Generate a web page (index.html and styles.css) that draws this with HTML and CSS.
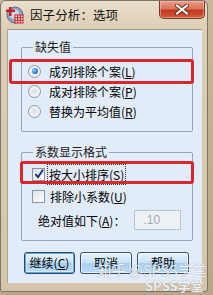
FILE: index.html
```html
<!DOCTYPE html>
<html lang="zh">
<head>
<meta charset="utf-8">
<link rel="stylesheet" href="styles.css">
</head>
<body>
<div class="window">
  <div class="titlebar">
    <svg class="app-icon" width="18" height="18" viewBox="0 0 18 18">
      <circle cx="9" cy="9" r="8" fill="#8fa3bd" stroke="#5d708c" stroke-width="1"/>
      <circle cx="8" cy="8" r="5" fill="#c9d6e6"/>
      <rect x="3" y="1" width="2.5" height="9" fill="#c4202a"/>
      <rect x="0" y="3.5" width="9" height="2.5" fill="#c4202a"/>
      <rect x="9" y="9" width="8" height="8" fill="#f3e3e3" stroke="#c4202a" stroke-width="1"/>
      <path d="M9 11.7H17M9 14.3H17M11.7 9V17M14.3 9V17" stroke="#c4202a" stroke-width="1"/>
    </svg>
    <span class="title">因子分析：选项</span>
    <div class="close">
      <svg width="16" height="11" viewBox="0 0 16 11">
        <path d="M3 1.5L13 9.5M13 1.5L3 9.5" stroke="#6b2a1f" stroke-width="4" stroke-linecap="round"/>
        <path d="M3 1.5L13 9.5M13 1.5L3 9.5" stroke="#fff" stroke-width="2.2" stroke-linecap="round"/>
      </svg>
    </div>
  </div>
  <div class="client">
    <fieldset class="group group-missing">
      <legend>缺失值</legend>
      <div class="row"><span class="radio on"></span><span>成列排除个案(<u>L</u>)</span></div>
      <div class="row"><span class="radio"></span><span>成对排除个案(<u>P</u>)</span></div>
      <div class="row"><span class="radio"></span><span>替换为平均值(<u>R</u>)</span></div>
    </fieldset>
    <fieldset class="group group-format">
      <legend>系数显示格式</legend>
      <div class="row crow"><span class="check on"><svg width="12" height="12" viewBox="0 0 12 12"><path d="M2.5 6.2L5 9.2L10 1.8" fill="none" stroke="#1c2f7a" stroke-width="2"/></svg></span><span class="focus">按大小排序(<u>S</u>)</span></div>
      <div class="row crow"><span class="check"></span><span>排除小系数(<u>U</u>)</span></div>
      <div class="row abs"><span class="abs-label">绝对值如下(<u>A</u>)：</span><span class="input">.10</span></div>
    </fieldset>
    <div class="buttons">
      <div class="btn default">继续(<u>C</u>)</div>
      <div class="btn">取消</div>
      <div class="btn">帮助</div>
    </div>
    <div class="mark mark1"></div>
    <div class="mark mark2"></div>
  </div>
  <div class="watermark">
    <div class="wm1">知乎 @SPSS学堂</div>
    <div class="wm2">SPSS学堂</div>
  </div>
</div>
</body>
</html>
```

FILE: styles.css
```css
html, body {
  margin: 0;
  padding: 0;
}
body {
  width: 213px;
  height: 295px;
  background: linear-gradient(to bottom, #c9b89c, #b9a688);
  font-family: "Noto Sans CJK SC", "Noto Sans", sans-serif;
  font-size: 12px;
  color: #000;
  overflow: hidden;
}
.window {
  position: relative;
  width: 206px;
  height: 290px;
  border: 1px solid #7d7468;
  border-radius: 6px 6px 3px 3px;
  background: linear-gradient(to bottom, #eadfcb 0px, #dccdb4 30px, #d5c5ab 100%);
  display: flex;
  flex-direction: column;
}
.titlebar {
  height: 28px;
  display: flex;
  align-items: flex-start;
  position: relative;
}
.app-icon {
  margin: 5px 0 0 5px;
}
.title {
  margin: 5px 0 0 6px;
  font-size: 12.5px;
  line-height: 17px;
  letter-spacing: 0.1px;
  color: #111;
}
.close {
  position: absolute;
  right: 2px;
  top: 0;
  width: 44px;
  height: 17px;
  border: 1px solid #6e3a2c;
  border-top: none;
  border-radius: 0 0 5px 5px;
  background: linear-gradient(to bottom, #eaa08c 0%, #db7258 45%, #c0391f 55%, #d2593a 100%);
  display: flex;
  align-items: center;
  justify-content: center;
  box-shadow: inset 0 0 0 1px rgba(255,200,180,0.5);
}
.client {
  position: relative;
  margin-left: 6px;
  width: 195px;
  height: 254px;
  box-sizing: border-box;
  background: #e2ecf8;
  border-top: 1px solid #a8987e;
  border-left: 1px solid #b3a48a;
  padding: 10px 0 0 13px;
}
.group {
  margin: 0;
  width: 172px;
  box-sizing: border-box;
  border: 1px solid #93a4b6;
  border-radius: 2px;
  padding: 7px 0 10px 6px;
}
.group legend {
  margin-left: 5px;
  padding: 0 2px;
  line-height: 14px;
  font-size: 12px;
  color: #1a1a1a;
}
.group-format {
  margin-top: 13px;
  padding-top: 4px;
  padding-bottom: 10px;
}
.row {
  height: 20px;
  display: flex;
  align-items: center;
  white-space: nowrap;
}
.crow {
  height: 22px;
}
.radio {
  width: 11px;
  height: 11px;
  border: 1px solid #8a96a3;
  border-radius: 50%;
  background: radial-gradient(circle at 50% 50%, #d8dde3 0, #f4f6f8 70%);
  margin-right: 8px;
  margin-left: 0;
  position: relative;
  flex: none;
}
.radio.on::after {
  content: "";
  position: absolute;
  left: 2.5px;
  top: 2.5px;
  width: 6px;
  height: 6px;
  border-radius: 50%;
  background: radial-gradient(circle at 35% 35%, #8fd2ff, #1d6fc4 70%);
}
.check {
  width: 11px;
  height: 11px;
  border: 1px solid #8a96a3;
  background: linear-gradient(135deg, #dfe3e8, #fbfcfd);
  margin: 0 5px 0 4px;
  flex: none;
  position: relative;
}
.check svg {
  position: absolute;
  left: 0;
  top: -1px;
}
.focus {
  outline: 1px dotted #333;
  outline-offset: 0;
  padding: 1px 1px;
  margin-left: -2px;
}
.abs {
  height: 20px;
  margin-top: 3px;
}
.abs-label {
  margin-left: 10px;
}
.input {
  margin-left: 9px;
  width: 47px;
  height: 20px;
  box-sizing: border-box;
  border: 1px solid #b8c2cc;
  background: #eef2f7;
  color: #a0a8b0;
  padding-left: 8px;
  line-height: 18px;
  font-family: "Liberation Sans", sans-serif;
  font-size: 12px;
}
u {
  text-decoration: underline;
  text-underline-offset: 1px;
}
.buttons {
  display: flex;
  gap: 5px;
  margin-top: 11px;
  margin-left: 3px;
}
.btn {
  width: 52px;
  height: 22px;
  box-sizing: border-box;
  border: 1px solid #3d4f66;
  border-radius: 3px;
  background: linear-gradient(to bottom, #e8f3fc 0%, #c8e1f6 50%, #a9d0f0 51%, #bcdcf5 100%);
  display: flex;
  align-items: center;
  justify-content: center;
  font-size: 12px;
  line-height: 14px;
  box-shadow: inset 0 0 0 1px rgba(255,255,255,0.6);
}
.btn.default {
  width: 51px;
  border-color: #2f4869;
  box-shadow: inset 0 0 0 1px #5ea8dc, inset 0 0 0 2px rgba(255,255,255,0.4);
}
.mark {
  position: absolute;
  border: 3px solid #d9262c;
  border-radius: 3px;
  box-sizing: border-box;
}
.mark1 {
  left: 1px;
  top: 29px;
  width: 185px;
  height: 25px;
}
.mark2 {
  left: 12px;
  top: 131px;
  width: 174px;
  height: 23px;
}
.watermark {
  position: absolute;
  left: 96px;
  top: 260px;
  color: rgba(255,255,255,0.88);
  text-shadow: 0 0 1px rgba(60,80,110,0.6);
  pointer-events: none;
}
.wm1 {
  font-size: 14.5px;
  line-height: 18px;
  white-space: nowrap;
}
.wm2 {
  font-size: 13px;
  line-height: 14px;
  margin-left: 48px;
  white-space: nowrap;
  font-weight: bold;
}
```
